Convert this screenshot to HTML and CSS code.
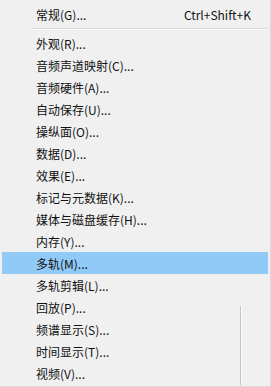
FILE: index.html
```html
<!DOCTYPE html>
<html lang="zh-CN">
<head>
    <meta charset="UTF-8">
    <title>首选项</title>
    <link rel="stylesheet" href="styles.css">
</head>
<body>
    <div class="menu">
        <div class="menu-item"><span>常规(G)...</span><span class="shortcut">Ctrl+Shift+K</span></div>
        <div class="separator"></div>
        <div class="menu-item">外观(R)...</div>
        <div class="menu-item">音频声道映射(C)...</div>
        <div class="menu-item">音频硬件(A)...</div>
        <div class="menu-item">自动保存(U)...</div>
        <div class="menu-item">操纵面(O)...</div>
        <div class="menu-item">数据(D)...</div>
        <div class="menu-item">效果(E)...</div>
        <div class="menu-item">标记与元数据(K)...</div>
        <div class="menu-item">媒体与磁盘缓存(H)...</div>
        <div class="menu-item">内存(Y)...</div>
        <div class="menu-item active">多轨(M)...</div>
        <div class="menu-item">多轨剪辑(L)...</div>
        <div class="menu-item">回放(P)...</div>
        <div class="menu-item">频谱显示(S)...</div>
        <div class="menu-item">时间显示(T)...</div>
        <div class="menu-item">视频(V)...</div>
        <div class="edge-line"></div>
    </div>
</body>
</html>
```

FILE: styles.css
```css
body {
    margin: 0;
    background-color: #f0f0f0;
}
.menu {
    position: relative;
    width: 266px;
    height: 381px;
    padding: 3px 2px 2px 2px;
    border-right: 1px solid #dadada;
    border-bottom: 1px solid #dadada;
    background-color: #f0f0f0;
    font-family: "Noto Sans CJK SC", "Noto Sans", sans-serif;
    font-size: 12px;
    color: #111;
}
.menu-item {
    display: flex;
    justify-content: space-between;
    align-items: center;
    height: 22px;
    padding: 0 17px 0 34px;
}
.menu-item.active {
    background-color: #91c9f7;
}
.separator {
    height: 1px;
    margin: 3px 0 2px 30px;
    background-color: #dcdcdc;
    border-bottom: 1px solid #fafafa;
}
.edge-line {
    position: absolute;
    left: 240px;
    top: 306px;
    bottom: 1px;
    width: 1px;
    background-color: #c4c4c4;
    border-right: 1px solid #fdfdfd;
}
```
